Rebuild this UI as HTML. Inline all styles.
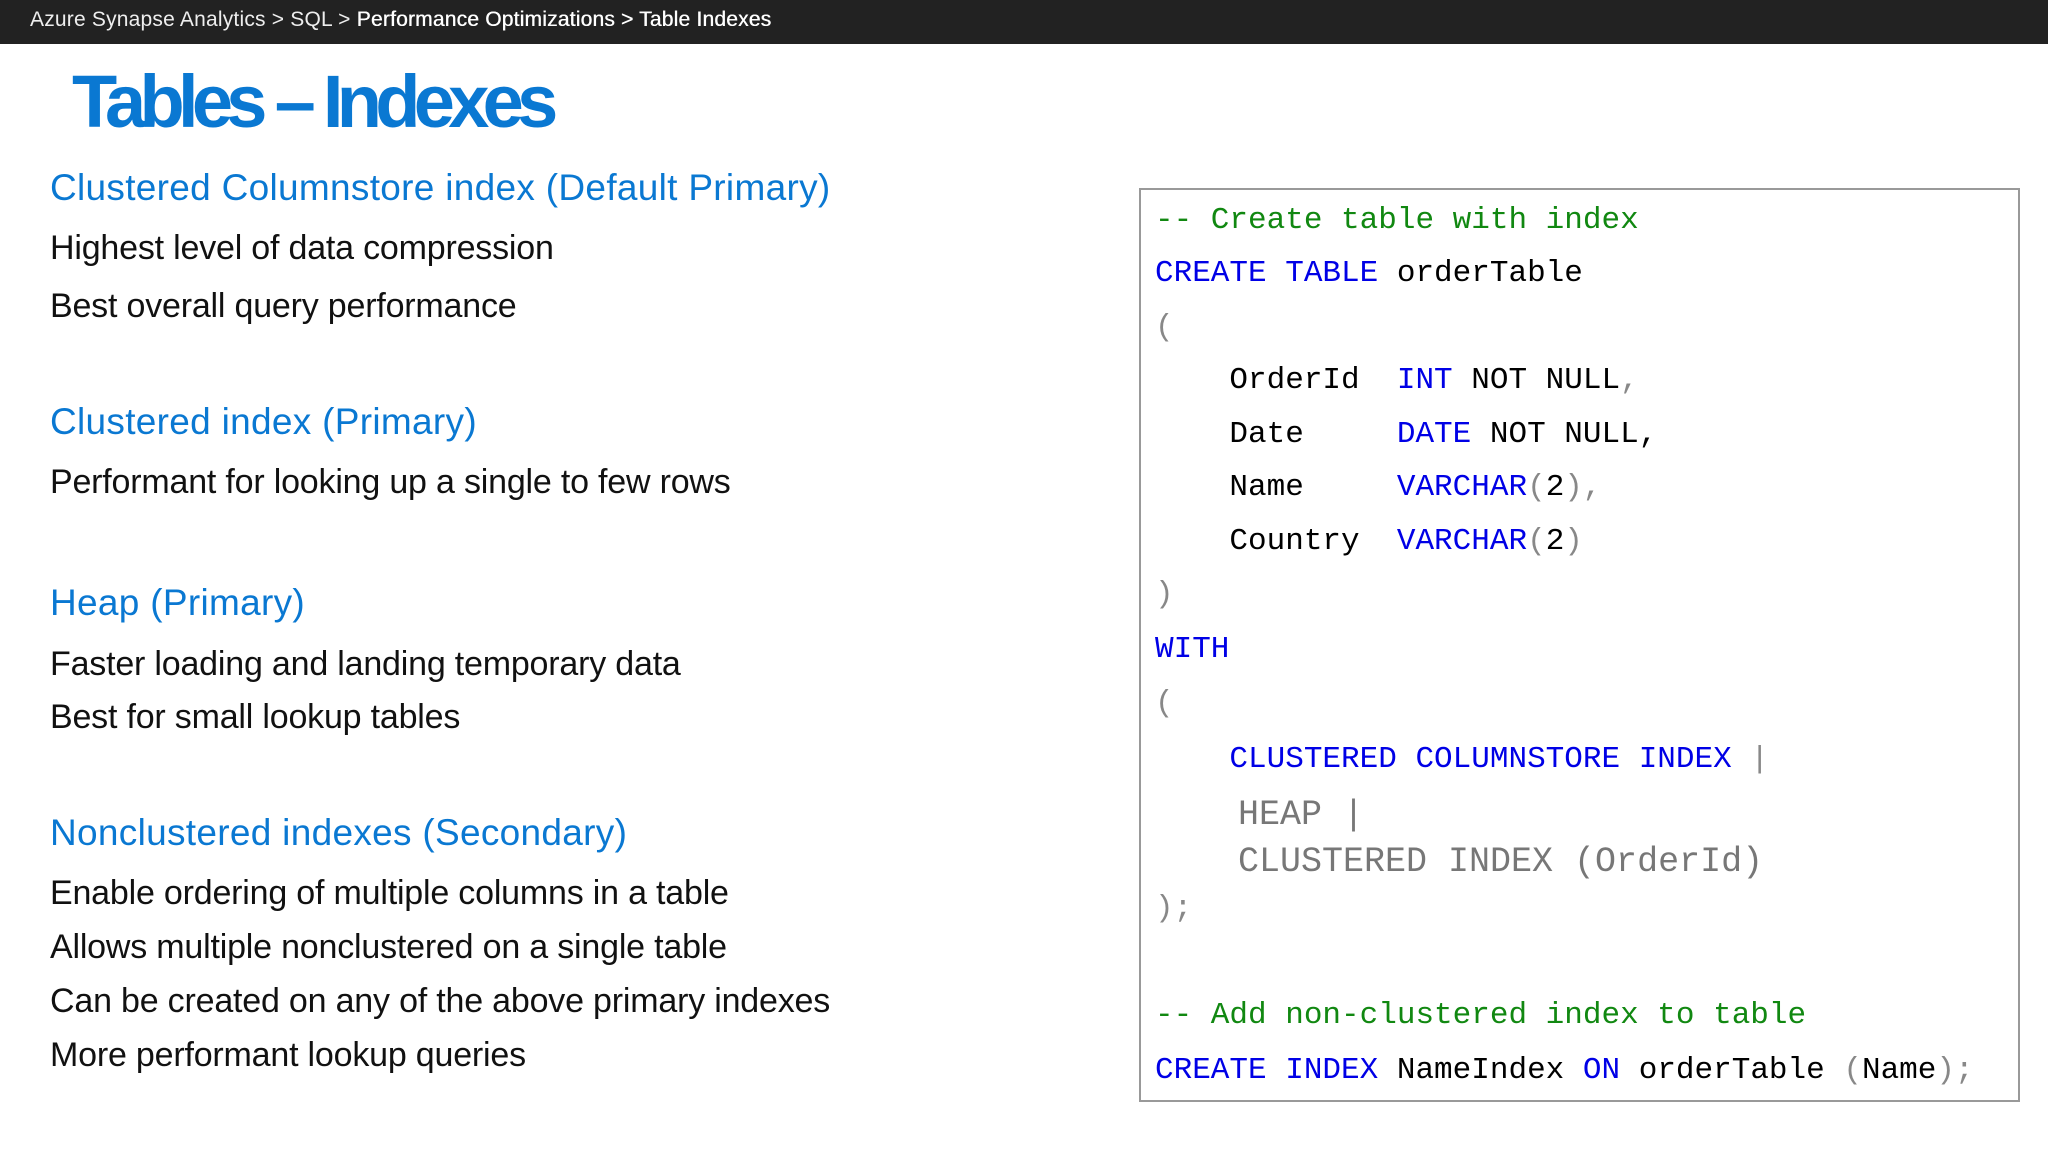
<!DOCTYPE html>
<html><head><meta charset="utf-8"><style>
*{margin:0;padding:0;box-sizing:border-box}
body{width:2048px;height:1152px;background:#fff;position:relative;overflow:hidden;font-family:"Liberation Sans",sans-serif}
.bar{position:absolute;left:0;top:0;width:2048px;height:44px;background:#222}
.t{position:absolute;line-height:1;white-space:nowrap}
.bc{left:30px;top:9px;font-size:21px;color:#eee;letter-spacing:0.2px}
.bc b{font-weight:normal;color:#fff;text-shadow:0.4px 0 0 #fff}
.title{left:72px;top:65px;font-size:74px;color:#0a78d2;font-weight:bold;letter-spacing:-6.7px}
.h{left:50px;font-size:37px;color:#0a78d2;letter-spacing:0.3px}
.b{left:50px;font-size:34px;color:#111;letter-spacing:-0.2px}
.box{position:absolute;left:1139px;top:188px;width:881px;height:914px;border:2px solid #999}
.c{position:absolute;font-family:"Liberation Mono",monospace;font-size:31px;line-height:1;white-space:pre;color:#000}
.k{color:#0000e6}.g{color:#118811}.p{color:#888}.gr{color:#777}
</style></head><body>
<div class="bar"></div>
<div class="t bc">Azure Synapse Analytics &gt; SQL &gt; <b>Performance Optimizations &gt; Table Indexes</b></div>
<div class="t title">Tables – Indexes</div>

<div class="t h" style="top:169px">Clustered Columnstore index (Default Primary)</div>
<div class="t b" style="top:231px">Highest level of data compression</div>
<div class="t b" style="top:289px">Best overall query performance</div>
<div class="t h" style="top:403px">Clustered index (Primary)</div>
<div class="t b" style="top:465px">Performant for looking up a single to few rows</div>
<div class="t h" style="top:584px">Heap (Primary)</div>
<div class="t b" style="top:647px">Faster loading and landing temporary data</div>
<div class="t b" style="top:700px">Best for small lookup tables</div>
<div class="t h" style="top:814px">Nonclustered indexes (Secondary)</div>
<div class="t b" style="top:876px">Enable ordering of multiple columns in a table</div>
<div class="t b" style="top:930px">Allows multiple nonclustered on a single table</div>
<div class="t b" style="top:984px">Can be created on any of the above primary indexes</div>
<div class="t b" style="top:1038px">More performant lookup queries</div>

<div class="box"></div>
<div class="c g" style="left:1155px;top:205px">-- Create table with index</div>
<div class="c" style="left:1155px;top:258px"><span class="k">CREATE TABLE</span> orderTable</div>
<div class="c p" style="left:1155px;top:312px">(</div>
<div class="c" style="left:1155px;top:365px">    OrderId  <span class="k">INT</span> NOT NULL<span class="p">,</span></div>
<div class="c" style="left:1155px;top:419px">    Date     <span class="k">DATE</span> NOT NULL,</div>
<div class="c" style="left:1155px;top:472px">    Name     <span class="k">VARCHAR</span><span class="p">(</span>2<span class="p">),</span></div>
<div class="c" style="left:1155px;top:526px">    Country  <span class="k">VARCHAR</span><span class="p">(</span>2<span class="p">)</span></div>
<div class="c p" style="left:1155px;top:579px">)</div>
<div class="c k" style="left:1155px;top:634px">WITH</div>
<div class="c p" style="left:1155px;top:688px">(</div>
<div class="c" style="left:1155px;top:744px">    <span class="k">CLUSTERED COLUMNSTORE INDEX</span> <span class="p">|</span></div>
<div class="c gr" style="left:1238px;top:798px;font-size:35px">HEAP |</div>
<div class="c gr" style="left:1238px;top:845px;font-size:35px">CLUSTERED INDEX (OrderId)</div>
<div class="c p" style="left:1155px;top:893px">);</div>
<div class="c g" style="left:1155px;top:1000px">-- Add non-clustered index to table</div>
<div class="c" style="left:1155px;top:1055px"><span class="k">CREATE INDEX</span> NameIndex <span class="k">ON</span> orderTable <span class="p">(</span>Name<span class="p">);</span></div>
</body></html>
